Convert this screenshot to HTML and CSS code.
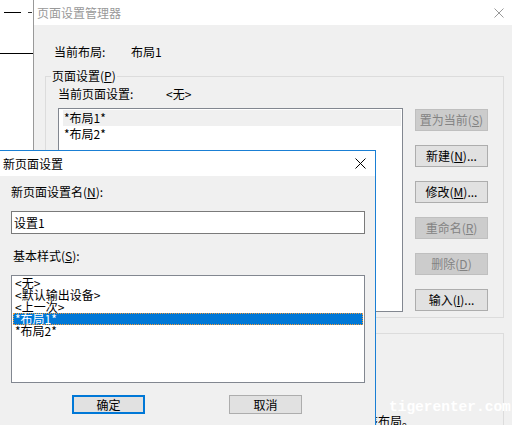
FILE: index.html
```html
<!DOCTYPE html>
<html lang="zh-CN">
<head>
<meta charset="utf-8">
<title>页面设置管理器</title>
<link rel="stylesheet" href="styles.css">
</head>
<body>
<div class="desk">
  <svg class="cad" width="33" height="150" viewBox="0 0 33 150">
    <line x1="4" y1="12.5" x2="21" y2="12.5" stroke="#000" stroke-width="1"/>
    <line x1="28" y1="12.5" x2="32" y2="12.5" stroke="#333" stroke-width="1"/>
    <line x1="0" y1="53.5" x2="33" y2="53.5" stroke="#000" stroke-width="1"/>
  </svg>

  <section class="win win-back">
    <div class="titlebar">
      <span class="title">页面设置管理器</span>
      <svg class="close" width="10" height="10" viewBox="0 0 10 10"><path d="M0.5 0.5L9.5 9.5M9.5 0.5L0.5 9.5" stroke="#999" stroke-width="1" fill="none"/></svg>
    </div>
    <div class="client-back">
      <div class="row cur"><span class="lbl-cur">当前布局:</span><span>布局1</span></div>
      <fieldset class="group">
        <legend>页面设置(<u>P</u>)</legend>
        <div class="group-inner">
          <div class="row"><span class="lbl-ps">当前页面设置:</span><span>&lt;无&gt;</span></div>
          <div class="ps-row">
            <ul class="listbox listbox-back">
              <li class="sel-inactive">*布局1*</li>
              <li>*布局2*</li>
            </ul>
            <div class="btn-col">
              <button class="btn" disabled>置为当前(<u>S</u>)</button>
              <button class="btn">新建(<u>N</u>)...</button>
              <button class="btn">修改(<u>M</u>)...</button>
              <button class="btn" disabled>重命名(<u>R</u>)</button>
              <button class="btn" disabled>删除(<u>D</u>)</button>
              <button class="btn">输入(<u>I</u>)...</button>
            </div>
          </div>
        </div>
      </fieldset>
      <div class="group2"><p class="g2text">该布局。</p></div>
    </div>
  </section>

  <section class="win win-front">
    <div class="titlebar">
      <span class="title">新页面设置</span>
      <svg class="close" width="11" height="11" viewBox="0 0 11 11"><path d="M0.5 0.5L10.5 10.5M10.5 0.5L0.5 10.5" stroke="#000" stroke-width="1" fill="none"/></svg>
    </div>
    <div class="client-front">
      <div class="lbl-name">新页面设置名(<u>N</u>):</div>
      <div class="textbox">设置1</div>
      <div class="lbl-style">基本样式(<u>S</u>):</div>
      <ul class="listbox listbox-front">
        <li>&lt;无&gt;</li>
        <li>&lt;默认输出设备&gt;</li>
        <li>&lt;上一次&gt;</li>
        <li class="sel">*布局1*</li>
        <li>*布局2*</li>
      </ul>
      <div class="btn-row">
        <button class="btn btn-small btn-default">确定</button>
        <button class="btn btn-small">取消</button>
      </div>
    </div>
  </section>

  <div class="watermark">tigerenter.com</div>
</div>
</body>
</html>
```

FILE: styles.css
```css
html, body {
  margin: 0;
  padding: 0;
}
body {
  font: 12px/14px "Noto Sans CJK SC", "Microsoft YaHei", sans-serif;
  color: #000;
}
.desk {
  position: relative;
  width: 512px;
  height: 425px;
  overflow: hidden;
  background: #fff;
}
.cad {
  position: absolute;
  left: 0;
  top: 0;
}
.win {
  position: absolute;
  box-sizing: border-box;
  background: #f0f0f0;
}
.win-back {
  left: 33px;
  top: 0;
  width: 479px;
  height: 425px;
  border-left: 1px solid #999;
}
.titlebar {
  height: 25px;
  background: #fff;
  display: flex;
  align-items: center;
  justify-content: space-between;
  white-space: nowrap;
}
.win-back .titlebar {
  padding: 0 8px 0 3px;
  color: #999;
}
.close {
  display: block;
}
.client-back {
  padding-left: 11px;
}
.row {
  display: flex;
  white-space: nowrap;
}
.cur {
  margin: 20px 0 0 9px;
}
.lbl-cur {
  width: 77px;
}
.group {
  margin: 9px 0 0 0;
  padding: 0;
  border: 1px solid #dcdcdc;
  width: 459px;
  box-sizing: border-box;
  min-width: 0;
}
.group legend {
  margin-left: 5px;
  padding: 0 1px;
  height: 16px;
  line-height: 16px;
}
.group-inner {
  padding: 3px 0 5px 12px;
}
.lbl-ps {
  width: 108px;
}
.ps-row {
  display: flex;
  gap: 12px;
  margin-top: 7px;
}
.listbox {
  list-style: none;
  margin: 0;
  background: #fff;
  border: 1px solid #828790;
  box-sizing: border-box;
  overflow: hidden;
}
.listbox li {
  white-space: nowrap;
}
.listbox-back {
  width: 345px;
  height: 204px;
  padding: 1px 1px 1px 4px;
}
.listbox-back li {
  height: 16px;
  line-height: 16px;
  padding-left: 1px;
}
.sel-inactive {
  background: #f0f0f0;
}
.btn-col {
  display: flex;
  flex-direction: column;
  gap: 14px;
  padding-top: 1px;
}
.btn {
  width: 73px;
  height: 22px;
  box-sizing: border-box;
  border: 1px solid #adadad;
  background: #e1e1e1;
  font: inherit;
  line-height: 20px;
  color: #000;
  padding: 0;
  text-align: center;
  white-space: nowrap;
}
.btn[disabled] {
  background: #cccccc;
  border-color: #bfbfbf;
  color: #838383;
}
.group2 {
  margin-top: 15px;
  width: 459px;
  height: 120px;
  box-sizing: border-box;
  border: 1px solid #dcdcdc;
  padding: 80px 0 0 320px;
}
.g2text {
  margin: 0;
  white-space: nowrap;
}

.win-front {
  left: -1px;
  top: 150px;
  width: 377px;
  height: 300px;
  border: 1px solid #1a7fd4;
}
.win-front .titlebar {
  padding: 0 9px 0 3px;
}
.client-front {
  padding-left: 11px;
}
.lbl-name {
  margin-top: 9px;
}
.textbox {
  margin-top: 12px;
  width: 354px;
  height: 23px;
  box-sizing: border-box;
  border: 1px solid #7a7a7a;
  background: #fff;
  padding-left: 2px;
  line-height: 21px;
}
.lbl-style {
  margin: 15px 0 0 2px;
}
.listbox-front {
  margin-top: 12px;
  width: 354px;
  height: 108px;
  padding: 1px;
}
.listbox-front li {
  height: 12px;
  line-height: 12px;
  padding-left: 2px;
}
.listbox-front .sel {
  background: #0078d7;
  color: #fff;
  outline: 1px dotted #f09a3a;
  outline-offset: -1px;
}
.btn-row {
  display: flex;
  gap: 84px;
  margin-top: 12px;
  padding-left: 61px;
}
.btn-small {
  height: 19px;
  line-height: 17px;
}
.btn-default {
  border: 2px solid #0078d7;
  line-height: 15px;
}
.watermark {
  position: absolute;
  left: 389px;
  top: 399px;
  font: bold 14.5px/16px "Liberation Mono", monospace;
  color: #fff;
  white-space: nowrap;
}
```
